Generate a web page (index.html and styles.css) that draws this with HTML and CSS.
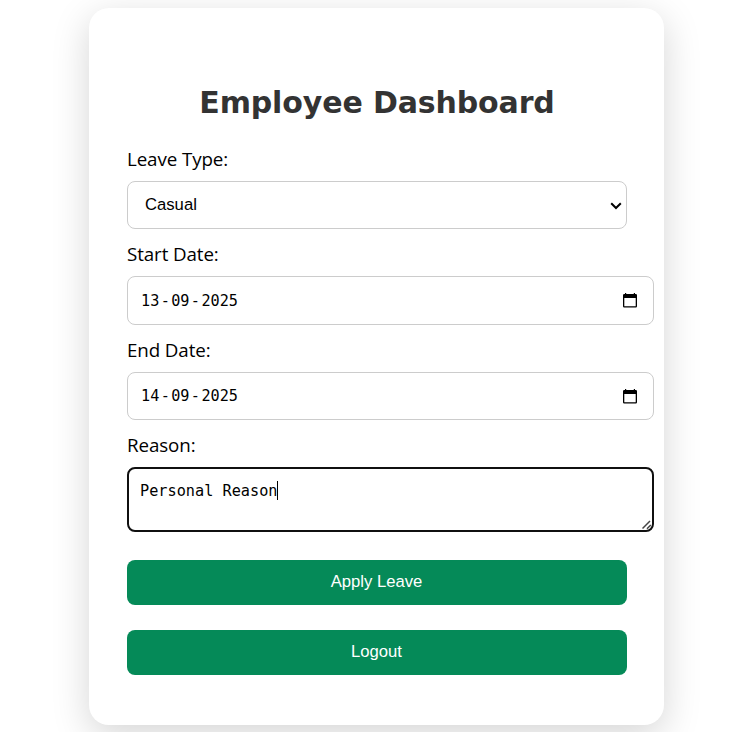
FILE: index.html
```html
<!DOCTYPE html>
<html lang="en">
<head>
<meta charset="utf-8">
<title>Employee Dashboard</title>
<link rel="stylesheet" href="styles.css">
</head>
<body>
<main class="card">
  <h1 class="title"><span>Employee Dashboard</span></h1>
  <div class="label"><span>Leave Type:</span></div>
  <div class="field select"><span>Casual</span>
    <svg class="chevron" width="12" height="8" viewBox="0 0 12 8"><path d="M1.2 1.2 6 6l4.8-4.8" fill="none" stroke="#000" stroke-width="2"/></svg>
  </div>
  <div class="label"><span>Start Date:</span></div>
  <div class="field date tall"><span class="value">13<i>-</i>09<i>-</i>2025</span>
    <svg class="calendar" width="14" height="15" viewBox="0 0 14 15"><path d="M2 0h1.200v1h7.600V0H12v1h.8q1.200 0 1.200 1.200v11.100q0 1.200-1.200 1.200H1.200Q0 14.500 0 13.300V2.200Q0 1 1.200 1H2zM1.300 5v8.200h11.400V5z" fill="#000" fill-rule="evenodd"/></svg>
  </div>
  <div class="label"><span>End Date:</span></div>
  <div class="field date"><span class="value">14<i>-</i>09<i>-</i>2025</span>
    <svg class="calendar" width="14" height="15" viewBox="0 0 14 15"><path d="M2 0h1.200v1h7.600V0H12v1h.8q1.200 0 1.200 1.200v11.100q0 1.200-1.200 1.200H1.200Q0 14.500 0 13.300V2.200Q0 1 1.200 1H2zM1.300 5v8.200h11.400V5z" fill="#000" fill-rule="evenodd"/></svg>
  </div>
  <div class="label"><span>Reason:</span></div>
  <div class="field reason"><span class="value">Personal Reason</span><span class="caret"></span>
    <svg class="grip" width="10" height="10" viewBox="0 0 10 10"><path d="M.5 8.500 8 1M5 8.800 8.800 5" fill="none" stroke="#444" stroke-width="1.500"/></svg>
  </div>
  <div class="button"><span>Apply Leave</span></div>
  <div class="button"><span>Logout</span></div>
</main>
</body>
</html>
```
FILE: styles.css
```css
* { box-sizing: border-box; }
body {
  height: 100vh;
  margin: 0;
  padding-top: 8px;
  overflow: hidden;
  background: #fff;
  color: #000;
}
.card {
  width: 575px;
  height: 717px;
  margin: 0 auto;
  padding: 75px 37px 0 38px;
  border-radius: 20px;
  background: #fff;
  box-shadow: 0 10px 37.500px rgba(0, 0, 0, .17);
}
.title {
  margin: 0 0 20px;
  font: bold 30px/40px "DejaVu Sans", sans-serif;
  letter-spacing: -.13px;
  color: #333;
  text-align: center;
  white-space: nowrap;
}
.label {
  height: 38px;
  padding-top: 3px;
  font: 18.750px/26px "Open Sans", sans-serif;
  letter-spacing: -.1px;
  white-space: nowrap;
}
.field {
  display: flex;
  align-items: center;
  justify-content: space-between;
  width: 527px;
  height: 48px;
  margin-bottom: 9px;
  border: 1px solid #ccc;
  border-radius: 8px;
  background: #fff;
}
.select {
  width: 500px;
  padding: 0 4px 0 17px;
  font: 16.670px/20px "Liberation Sans", sans-serif;
}
.chevron { margin-top: 2px; }
.tall { height: 49px; }
.date { padding: 0 16.500px 0 13px; }
.value { font: 15.200px/20px "DejaVu Sans Mono", monospace; letter-spacing: .02px; white-space: pre; }
.value i { font-style: normal; margin: 0 1.350px; }
.reason {
  position: relative;
  justify-content: flex-start;
  align-items: flex-start;
  height: 65px;
  margin-bottom: 28px;
  padding: 12px 11px;
  border: 2px solid #101010;
}
.caret { width: 1px; height: 19px; background: #000; }
.grip { position: absolute; right: 0; bottom: 0; }
.button {
  display: flex;
  align-items: center;
  justify-content: center;
  height: 45px;
  margin-bottom: 25px;
  padding: 0 1px 2px 0;
  border-radius: 8px;
  background: #058a58;
  color: #fff;
  font: 16.670px/20px "Liberation Sans", sans-serif;
}
```
